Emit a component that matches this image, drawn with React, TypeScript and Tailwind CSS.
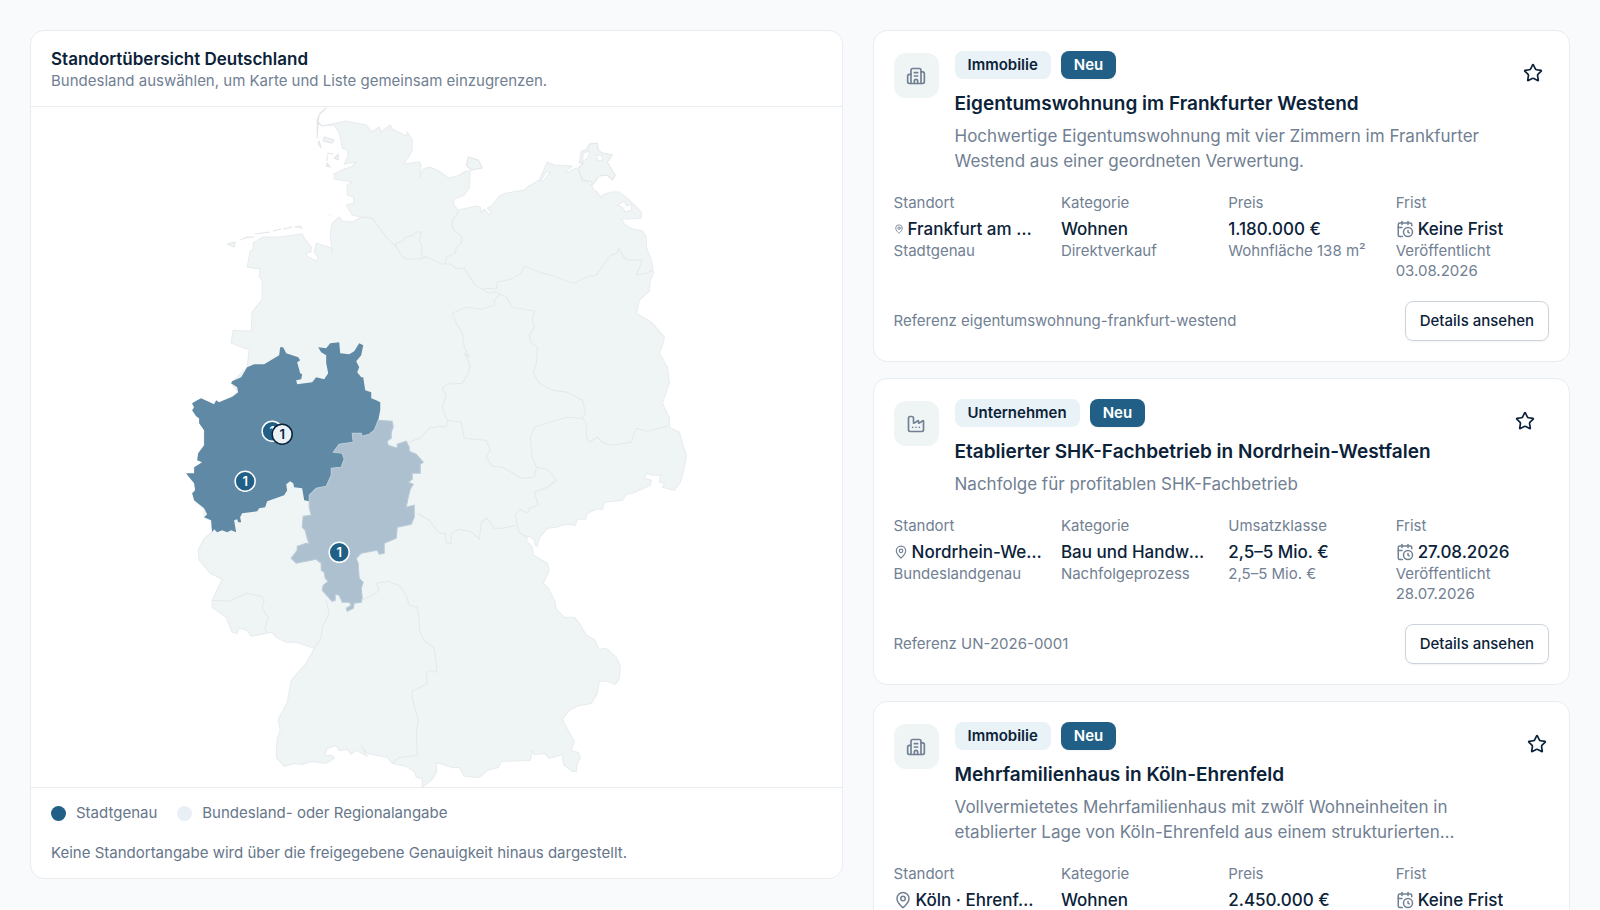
import React from "react";
import {
  Building2,
  CalendarClock,
  Factory,
  MapPin,
  Star,
  type LucideIcon,
} from "lucide-react";
import { clsx } from "clsx";

type Fact = {
  label: string;
  value: string;
  hint: string;
  icon?: LucideIcon;
  iconClass?: string;
};

type Listing = {
  id: string;
  kind: string;
  icon: LucideIcon;
  title: string;
  summary: string;
  facts: Fact[];
  starClass: string;
};

const LISTINGS: Listing[] = [
  {
    id: "eigentumswohnung-frankfurt-westend",
    kind: "Immobilie",
    icon: Building2,
    title: "Eigentumswohnung im Frankfurter Westend",
    summary:
      "Hochwertige Eigentumswohnung mit vier Zimmern im Frankfurter Westend aus einer geordneten Verwertung.",
    starClass: "w-8",
    facts: [
      {
        label: "Standort",
        value: "Frankfurt am Main",
        hint: "Stadtgenau",
        icon: MapPin,
        iconClass: "size-2.5",
      },
      { label: "Kategorie", value: "Wohnen", hint: "Direktverkauf" },
      { label: "Preis", value: "1.180.000 €", hint: "Wohnfläche 138 m²" },
      {
        label: "Frist",
        value: "Keine Frist",
        hint: "Veröffentlicht 03.08.2026",
        icon: CalendarClock,
        iconClass: "size-[18px]",
      },
    ],
  },
  {
    id: "UN-2026-0001",
    kind: "Unternehmen",
    icon: Factory,
    title: "Etablierter SHK-Fachbetrieb in Nordrhein-Westfalen",
    summary: "Nachfolge für profitablen SHK-Fachbetrieb",
    starClass: "w-12",
    facts: [
      {
        label: "Standort",
        value: "Nordrhein-Westfalen",
        hint: "Bundeslandgenau",
        icon: MapPin,
        iconClass: "size-3.5",
      },
      {
        label: "Kategorie",
        value: "Bau und Handwerk",
        hint: "Nachfolgeprozess",
      },
      { label: "Umsatzklasse", value: "2,5–5 Mio. €", hint: "2,5–5 Mio. €" },
      {
        label: "Frist",
        value: "27.08.2026",
        hint: "Veröffentlicht 28.07.2026",
        icon: CalendarClock,
        iconClass: "size-[18px]",
      },
    ],
  },
  {
    id: "mehrfamilienhaus-koeln-ehrenfeld",
    kind: "Immobilie",
    icon: Building2,
    title: "Mehrfamilienhaus in Köln-Ehrenfeld",
    summary:
      "Vollvermietetes Mehrfamilienhaus mit zwölf Wohneinheiten in etablierter Lage von Köln-Ehrenfeld aus einem strukturierten Verkaufsprozess eines Eigentümers.",
    starClass: "w-6",
    facts: [
      {
        label: "Standort",
        value: "Köln · Ehrenf…",
        hint: "Stadtgenau",
        icon: MapPin,
        iconClass: "size-[18px]",
      },
      { label: "Kategorie", value: "Wohnen", hint: "Direktverkauf" },
      { label: "Preis", value: "2.450.000 €", hint: "Wohnfläche 840 m²" },
      {
        label: "Frist",
        value: "Keine Frist",
        hint: "Veröffentlicht 01.08.2026",
        icon: CalendarClock,
        iconClass: "size-[18px]",
      },
    ],
  },
];

const COUNTRY =
  "M323 126L347 121L367 125L373 132L380 127L382 132L391 125L393 129L407 136L408 132L413 140L413 150L410 156L404 164L420 162L422 165L420 178L424 169L430 167L438 170L450 178L458 176L467 171L471 171L470 188L465 195L455 199L454 204L459 210L477 206L481 207L482 212L485 209L490 215L492 212L488 208L493 205L500 196L507 193L525 190L528 187L540 180L548 162L555 165L573 166L565 172L569 172L577 168L581 175L583 181L587 182L592 185L594 189L598 192L602 198L603 195L612 192L620 192L630 200L642 212L642 218L630 219L622 219L625 224L633 229L643 231L647 237L647 247L652 260L654 273L651 280L650 291L640 300L637 313L652 322L665 337L663 345L660 353L668 367L670 383L663 403L670 418L670 427L680 432L683 443L687 455L685 467L681 482L675 490L663 487L665 483L660 482L661 475L653 475L647 473L645 478L652 480L651 485L640 490L633 493L627 494L623 500L605 502L603 509L597 509L588 513L586 519L578 519L576 525L567 524L557 527L548 528L540 538L538 546L536 545L535 540L529 535L527 540L533 547L534 555L548 563L550 570L544 583L549 588L556 602L557 609L565 617L575 617L580 623L587 635L595 639L600 649L607 648L617 657L621 665L620 678L616 684L607 681L600 681L598 693L592 703L580 705L570 710L563 719L575 741L572 750L579 752L581 757L578 763L577 771L573 771L564 764L563 754L550 758L545 753L535 754L533 750L531 760L502 761L499 767L488 770L480 777L465 776L460 767L453 767L437 762L437 772L433 779L423 787L423 778L417 777L415 771L407 766L393 763L388 757L368 753L362 745L368 756L357 750L352 754L348 749L340 750L337 745L328 748L326 755L333 755L335 758L327 763L313 761L303 764L295 763L285 766L277 757L278 738L281 730L279 719L288 702L292 680L307 663L315 648L297 642L287 642L277 637L273 632L252 636L248 630L240 628L238 633L233 632L227 617L213 607L213 600L223 579L211 573L200 560L199 550L205 538L213 532L212 520L205 517L205 508L195 500L205 445L205 430L193 403L215 404L232 397L239 392L232 383L248 367L250 349L245 348L232 343L234 330L252 331L253 312L263 299L263 280L260 277L261 269L248 267L251 251L254 250L254 243L263 237L280 237L303 234L305 238L312 247L312 252L307 253L308 256L317 261L319 257L315 252L317 243L332 248L333 252L331 233L333 223L340 217L343 221L353 222L362 217L353 215L347 205L355 203L354 197L348 195L348 185L353 182L335 179L335 174L345 169L352 167L357 162L345 164L349 155L348 150L343 148L340 133L335 125Z";

const ISLANDS = [
  "M327 108L320 115L319 122L323 126L320 124L319 121L318 138L318 120L321 113Z",
  "M325 137L335 140L333 143L324 141Z",
  "M320 141L322 148L319 144Z",
  "M328 153L334 154M328 155L328 161M335 158L339 154L339 160Z",
  "M328 163L331 167L327 166Z",
  "M330 214L331 215",
  "M228 244L236 242L235 247Z",
  "M241 240L248 237L255 237M256 234L271 232M274 231L282 229M284 229L293 227M295 227L301 226L303 229",
  "M467 165L469 157L479 160L483 168L472 170Z",
  "M598 143L590 144L587 150L582 151L580 163L584 163L579 168L583 180L592 182L593 185L600 176L608 175L613 180L616 175L613 171L608 162L613 155L603 153L599 150Z",
];

// lagoons cut out of the Baltic coast
const LAGOONS = [
  "M547 172L551 172L544 181L541 181Z",
  "M597 155L603 156L603 161L598 160Z",
  "M584 153L590 151L589 157L583 162Z",
  "M618 205L625 201L627 206L632 204L632 210L626 212L623 207Z",
];

const BORDERS = [
  "M362 217L373 218L387 237L397 247L402 255L407 259L420 259L428 257L442 264L452 264L457 269L465 268L468 273L477 286L483 289L497 288L498 282L512 279L522 273L525 266L540 272L555 276L567 281L575 283L587 277L597 275L605 263L612 255L618 253L619 248L623 255L627 260L643 260L637 275L648 273L653 270",
  "M397 247L397 243L402 242L407 237L415 235L416 232L422 232L420 240L423 247L422 255L428 258",
  "M459 210L457 215L453 220L453 228L458 233L463 237L462 243L457 247L456 253L447 257L446 264",
  "M483 289L490 293L497 292L507 297L513 307L535 311L533 320L535 327L530 335L531 342L538 347L537 363L534 373L540 383L553 390L568 392L583 400L586 412L583 418L587 423L587 437L590 442L598 437L603 442L612 445L632 442L637 428L648 431L668 426",
  "M501 294L495 300L495 305L483 309L467 307L453 313L457 323L463 333L465 347L470 357L465 353L471 365L469 373L463 383L448 384L443 388L447 395L443 407L448 420L447 427L440 426L430 428L422 437L410 442",
  "M448 420L462 422L465 438L487 440L491 450L487 457L493 466L503 467L512 472L522 478L535 477",
  "M583 418L568 417L550 422L535 427L531 437L533 457L537 467L535 477",
  "M537 467L548 469L557 480L548 487L535 492L539 505L530 508L528 513L520 509L516 515L518 525L520 532L527 537",
  "M518 525L503 528L495 528L488 518L482 522L480 539L473 532L460 529L452 533L452 543L447 543L446 533L440 533L430 520L418 513",
  "M363 600L373 595L380 590L377 583L390 581L393 583L400 585L407 595L410 605L418 607L420 620L420 630L425 640L435 648L438 672L432 670L427 672L428 683L413 691L413 698L419 720L417 733L418 755L400 757L393 763",
  "M213 600L230 601L248 593L262 596L265 600L263 608L269 617L266 628L268 633",
  "M327 600L330 613L323 627L322 637L315 648",
];

const NRW =
  "M248 367L255 364L265 364L280 355L281 347L284 347L287 353L299 357L301 360L298 362L301 373L303 374L302 379L297 380L298 384L313 382L317 377L325 379L329 373L327 363L327 355L322 352L319 347L327 348L331 343L340 342L341 353L350 354L355 351L360 343L364 345L362 355L357 361L360 367L358 372L362 377L364 377L366 390L372 392L372 398L377 400L381 402L381 410L379 420L375 430L370 434L363 436L362 433L353 433L354 442L340 444L334 452L343 453L345 459L342 467L332 468L332 475L327 486L317 488L310 495L310 501L305 500L303 488L295 487L294 483L291 481L287 484L288 490L285 495L268 501L266 507L260 508L258 511L243 513L241 517L242 522L239 522L238 519L235 520L237 532L232 530L228 532L223 530L218 532L215 529L213 532L212 520L205 517L208 514L205 508L195 500L193 493L196 490L195 483L190 477L187 473L195 473L195 467L203 462L198 460L199 453L205 445L205 430L200 423L200 418L197 416L193 410L195 407L193 403L198 400L202 398L215 404L217 400L220 402L232 397L234 396L239 392L238 387L232 383L233 381L242 377Z";

const HESSEN =
  "M379 420L393 421L394 427L392 432L392 438L388 441L389 445L398 448L398 444L407 441L410 447L410 451L417 454L424 462L421 464L421 473L413 473L413 479L409 482L414 484L411 489L409 497L407 507L415 505L415 517L412 524L398 527L397 538L385 543L385 553L380 554L378 550L367 552L362 553L357 558L359 563L360 578L364 582L362 588L363 597L362 602L355 603L354 608L348 611L347 608L352 605L350 602L343 602L340 595L336 594L336 600L333 601L323 590L324 585L329 581L326 578L325 572L322 570L322 563L317 559L297 563L292 558L298 550L298 546L307 543L310 543L308 538L306 530L303 527L304 516L312 515L310 507L310 495L317 488L327 486L332 475L332 468L342 467L345 459L343 453L334 452L340 444L354 442L353 433L362 433L363 436L370 434L375 430Z";

const MARKERS = [
  { x: 273, y: 431, exact: true },
  { x: 283, y: 434, exact: false },
  { x: 246, y: 481, exact: true },
  { x: 340, y: 552, exact: true },
];

const GermanyMap: React.FC = () => (
  <svg
    viewBox="32 107 810 680"
    className="block h-auto w-full"
    role="img"
    aria-label="Deutschlandkarte"
  >
    <g className="fill-[#eff4f5] stroke-[#e8ebee]" strokeLinejoin="round">
      <path d={COUNTRY} />
    </g>
    <g className="fill-[#eff4f5] stroke-[#e2e5e8]" strokeLinejoin="round">
      {ISLANDS.map((d) => (
        <path key={d} d={d} />
      ))}
    </g>
    <g className="fill-white stroke-[#e8ebee]">
      {LAGOONS.map((d) => (
        <path key={d} d={d} />
      ))}
    </g>
    <g className="fill-none stroke-[#e5e8eb]" strokeLinejoin="round">
      {BORDERS.map((d) => (
        <path key={d} d={d} />
      ))}
    </g>
    <path d={NRW} className="fill-[#5f89a5]" />
    <path d={HESSEN} className="fill-[#adc0cf] stroke-[#b9cad7]" />
    {MARKERS.map(({ x, y, exact }) => (
      <g key={`${x}-${y}`}>
        <circle
          cx={x}
          cy={y}
          r={10}
          strokeWidth={1.5}
          className={clsx(
            exact
              ? "fill-[#225f86] stroke-white"
              : "fill-[#e9f2f6] stroke-[#0b2239]"
          )}
        />
        <text
          x={x}
          y={y + 4.5}
          textAnchor="middle"
          className={clsx(
            "text-[13px] font-semibold",
            exact ? "fill-white" : "fill-[#0b2239]"
          )}
        >
          1
        </text>
      </g>
    ))}
  </svg>
);

const MapPanel: React.FC = () => (
  <section className="overflow-hidden rounded-[14px] border border-[#eaedf0] bg-white">
    <header className="border-b border-[#eaedf0] px-5 pt-4 pb-[15px]">
      <h2 className="text-[17px] leading-6 font-semibold">
        Standortübersicht Deutschland
      </h2>
      <p className="text-[15px] leading-5 text-[#718093]">
        Bundesland auswählen, um Karte und Liste gemeinsam einzugrenzen.
      </p>
    </header>
    <GermanyMap />
    <footer className="border-t border-[#eaedf0] px-5 py-[15px] text-[15px] leading-5 text-[#66768a]">
      <ul className="flex flex-wrap gap-5">
        <li className="flex items-center gap-2.5">
          <span className="size-[15px] rounded-full bg-[#225f86]" />
          Stadtgenau
        </li>
        <li className="flex items-center gap-2.5">
          <span className="size-[15px] rounded-full bg-[#e8f0f6]" />
          Bundesland- oder Regionalangabe
        </li>
      </ul>
      <p className="mt-5">
        Keine Standortangabe wird über die freigegebene Genauigkeit hinaus
        dargestellt.
      </p>
    </footer>
  </section>
);

const FactCell: React.FC<{ fact: Fact }> = ({ fact }) => {
  const Icon = fact.icon;

  return (
    <div className="min-w-0">
      <dt className="text-[15px] leading-5 text-[#718093]">{fact.label}</dt>
      <dd className="mt-1 flex items-center gap-1 text-[17px] leading-6 font-medium">
        {Icon && (
          <Icon className={clsx("shrink-0 text-[#718093]", fact.iconClass)} />
        )}
        <span className="truncate">{fact.value}</span>
      </dd>
      <dd className="text-[15px] leading-5 text-[#718093]">{fact.hint}</dd>
    </div>
  );
};

const ListingCard: React.FC<{ listing: Listing }> = ({ listing }) => {
  const KindIcon = listing.icon;

  return (
    <article className="rounded-[14px] border border-[#eaedf0] bg-white p-5">
      <div className="flex items-start gap-4">
        <div className="mt-0.5 flex size-[45px] shrink-0 items-center justify-center rounded-xl bg-[#eff4f5] text-[#718093]">
          <KindIcon size={20} />
        </div>
        <div className="min-w-0 flex-1">
          <div className="flex gap-2.5">
            <span className="rounded-lg bg-[#e9f2f6] px-[13px] text-[15px] leading-7 font-semibold">
              {listing.kind}
            </span>
            <span className="rounded-lg bg-[#225f86] px-[13px] text-[15px] leading-7 font-semibold text-white shadow-xs">
              Neu
            </span>
          </div>
          <h3 className="mt-3 text-[19px] leading-[26px] font-semibold">
            {listing.title}
          </h3>
          <p className="mt-[7px] line-clamp-2 text-[17px] leading-[25px] text-[#718093]">
            {listing.summary}
          </p>
        </div>
        <button
          type="button"
          aria-label={`${listing.title} merken`}
          className={clsx(
            "flex h-11 shrink-0 cursor-pointer items-center justify-center",
            listing.starClass
          )}
        >
          <Star size={20} />
        </button>
      </div>
      <dl className="mt-[19px] grid grid-cols-4 gap-3.5">
        {listing.facts.map((fact) => (
          <FactCell key={fact.label} fact={fact} />
        ))}
      </dl>
      <div className="mt-5 flex items-center justify-between gap-4">
        <p className="text-[15px] leading-5 text-[#718093]">
          Referenz {listing.id}
        </p>
        <button
          type="button"
          className="h-10 cursor-pointer rounded-lg border border-[#ccd3da] px-3.5 text-[15px] font-medium shadow-xs"
        >
          Details ansehen
        </button>
      </div>
    </article>
  );
};

export default function App() {
  return (
    <main className="grid min-h-screen grid-cols-[minmax(0,812fr)_minmax(0,697fr)] items-start gap-[30px] bg-[#f8fafc] p-[30px] font-['Inter',sans-serif] text-[#0b2239]">
      <MapPanel />
      <div className="flex flex-col gap-4">
        {LISTINGS.map((listing) => (
          <ListingCard key={listing.id} listing={listing} />
        ))}
      </div>
    </main>
  );
}
